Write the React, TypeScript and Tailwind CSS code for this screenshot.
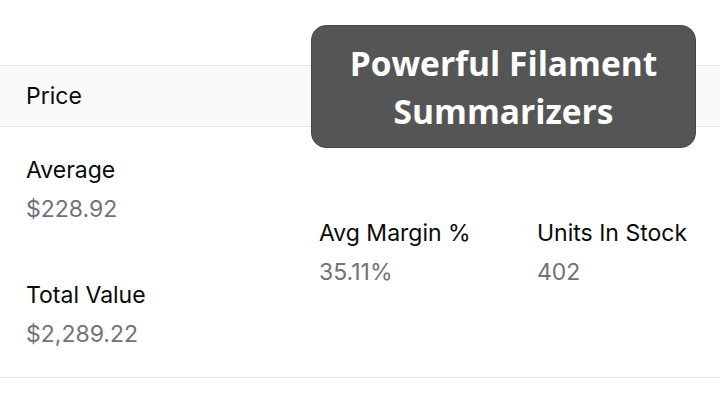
import React from "react";

const stats = {
  average: "$228.92",
  totalValue: "$2,289.22",
  avgMargin: "35.11%",
  unitsInStock: "402",
};

function Stat({ label, value }: { label: string; value: string }) {
  return (
    <div className="leading-[39px]">
      <div className="text-[#0a0a0a]">{label}</div>
      <div className="text-[#71717a]">{value}</div>
    </div>
  );
}

export default function App() {
  return (
    <div className="relative w-[720px] h-[404px] bg-white overflow-hidden font-['Inter','Liberation_Sans',sans-serif] text-[23px]">
      {/* table */}
      <div className="pt-[65px]">
        <div className="flex h-[62px] items-center bg-[#fafafa] border-y border-[#e5e5e5]">
          <div className="w-[293px] pl-[26px] text-[#0a0a0a]">Price</div>
        </div>

        <div className="flex items-center border-b border-[#e5e5e5] pt-[24px] pb-[23px]">
          <div className="w-[293px] pl-[26px] flex flex-col gap-[47px]">
            <Stat label="Average" value={stats.average} />
            <Stat label="Total Value" value={stats.totalValue} />
          </div>
          <div className="w-[218px] pl-[26px]">
            <Stat label="Avg Margin %" value={stats.avgMargin} />
          </div>
          <div className="flex-1 pl-[26px] whitespace-nowrap">
            <Stat label="Units In Stock" value={stats.unitsInStock} />
          </div>
        </div>
      </div>

      {/* overlay caption */}
      <div className="absolute left-[311px] top-[25px] w-[385px] h-[123px] rounded-[15px] bg-[#555555] border border-[#474747] flex items-center justify-center">
        <div className="text-center text-white font-bold text-[33.5px] leading-[48px] font-['Open_Sans','Liberation_Sans',sans-serif]">
          Powerful Filament
          <br />
          Summarizers
        </div>
      </div>
    </div>
  );
}
